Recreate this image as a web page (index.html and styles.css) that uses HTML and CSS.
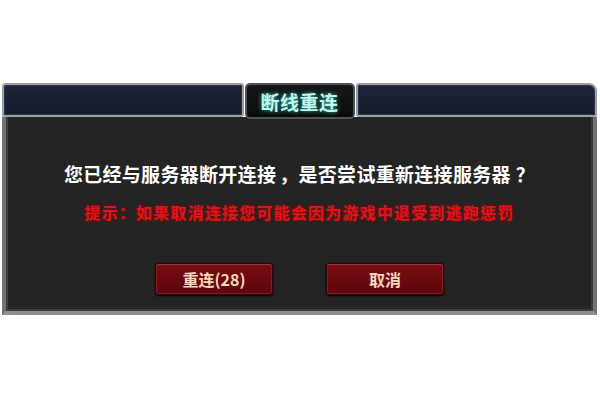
FILE: index.html
```html
<!DOCTYPE html>
<html lang="zh">
<head>
<meta charset="utf-8">
<link rel="stylesheet" href="styles.css">
</head>
<body>
<div class="dialog">
  <div class="head">
    <div class="bar bar-left"></div>
    <div class="tab">断线重连</div>
    <div class="bar bar-right"></div>
  </div>
  <div class="panel">
    <div class="msg">您已经与服务器断开连接<span class="comma">，</span>是否尝试重新连接服务器<span class="qmark">？</span></div>
    <div class="tip">提示：如果取消连接您可能会因为游戏中退受到逃跑惩罚</div>
    <div class="buttons">
      <div class="btn">重连(28)</div>
      <div class="btn">取消</div>
    </div>
  </div>
</div>
</body>
</html>
```
FILE: styles.css
```css
html, body {
  margin: 0;
  background: #ffffff;
}
.dialog {
  margin: 83px 0 0 2px;
  width: 595px;
  font-family: "Noto Sans CJK SC", "Noto Sans", sans-serif;
}
.head {
  display: flex;
  height: 34px;
  align-items: flex-start;
}
.bar {
  flex: 1;
  height: 34px;
  box-sizing: border-box;
  background: linear-gradient(#1d2539, #151b2c);
  border: 2px solid #9a9ea5;
  box-shadow: inset 0 0 0 1px #2e3548;
}
.bar-left {
  border-radius: 4px 3px 3px 2px;
}
.bar-right {
  border-radius: 3px 8px 2px 3px;
}
.tab {
  width: 110px;
  height: 36px;
  box-sizing: border-box;
  margin: 0 1px;
  background: linear-gradient(#151617, #0b0c0d);
  border: 2px solid #505357;
  border-radius: 5px;
  display: flex;
  align-items: center;
  justify-content: center;
  color: #c4f5ec;
  font-size: 19px;
  font-weight: bold;
  letter-spacing: 0.5px;
  text-shadow: 0 0 4px #2fc9b4;
  position: relative;
  z-index: 1;
}
.panel {
  height: 198px;
  box-sizing: border-box;
  background: #242424;
  border-left: 4px solid #6f7277;
  border-right: 4px solid #6f7277;
  border-bottom: 4px solid #8d9094;
  box-shadow: inset 2px 0 0 #3a3c3f, inset -2px 0 0 #3a3c3f, inset 0 -2px 0 #3a3c3f;
  padding-top: 45px;
  display: flex;
  flex-direction: column;
  align-items: center;
}
.msg {
  color: #ffffff;
  font-size: 19px;
  font-weight: bold;
  line-height: 24px;
  letter-spacing: 0.3px;
}
.comma {
  margin-left: 3px;
}
.qmark {
  margin-left: 5px;
}
.tip {
  margin-top: 16px;
  color: #e0141a;
  font-size: 16px;
  font-weight: bold;
  line-height: 20px;
  letter-spacing: 1.2px;
  text-shadow: 0 0 3px #b00000;
}
.buttons {
  margin-top: 41px;
  display: flex;
  gap: 53px;
}
.btn {
  width: 118px;
  height: 32px;
  box-sizing: border-box;
  background: linear-gradient(#7a0d12, #5c070b);
  border: 1px solid #2a0608;
  border-radius: 3px;
  box-shadow: inset 0 1px 0 #a0343a, inset 0 0 0 1px #8a1a20, 0 1px 2px #000;
  display: flex;
  align-items: center;
  justify-content: center;
  color: #f5d6bd;
  font-size: 16px;
  font-weight: bold;
}
```
